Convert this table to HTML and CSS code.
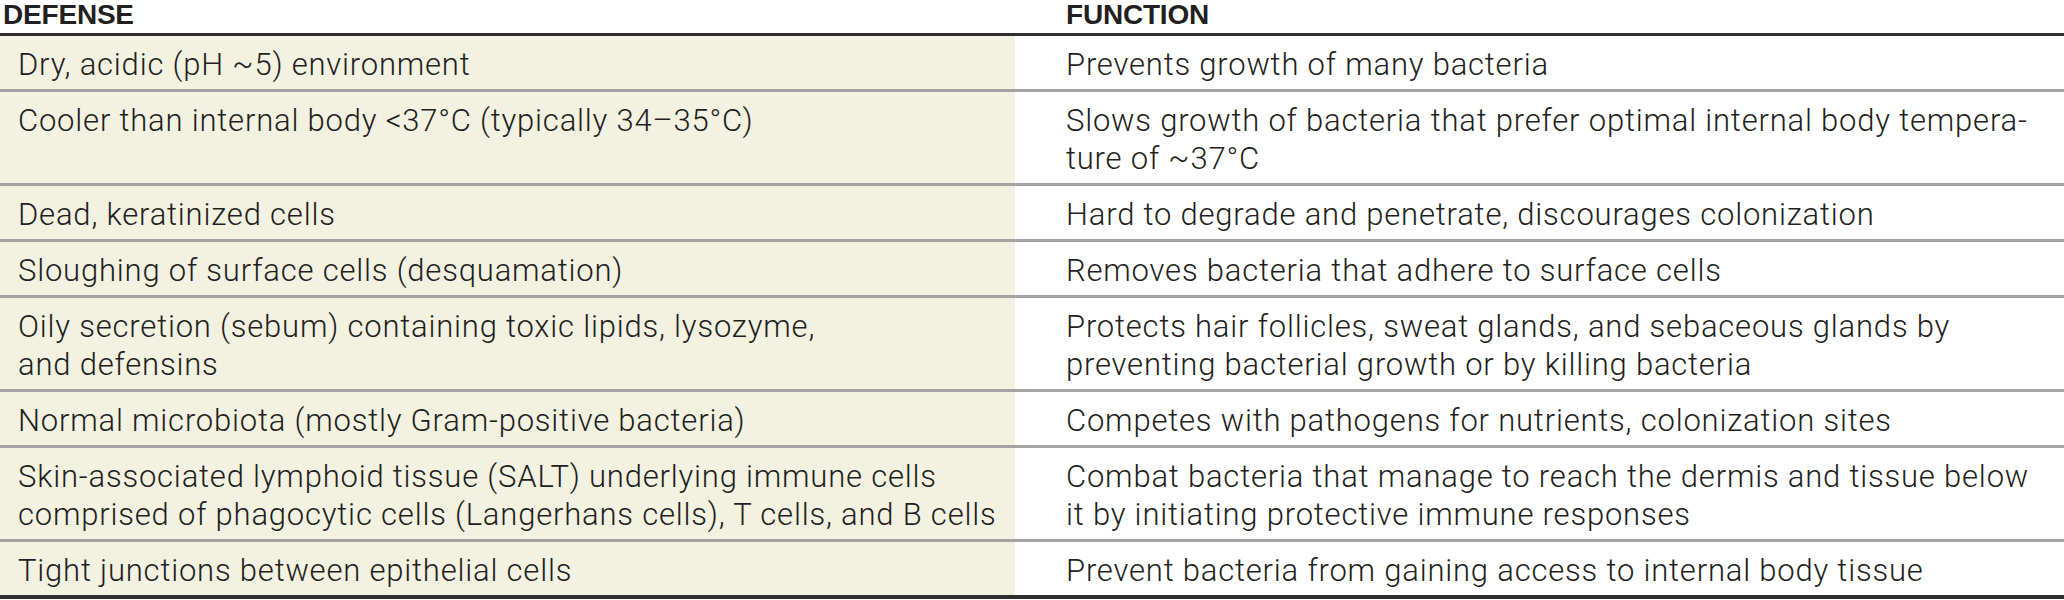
FILE: index.html
```html
<!DOCTYPE html>
<html>
<head>
<meta charset="utf-8">
<link rel="stylesheet" href="styles.css">
</head>
<body>
<div class="table">
  <div class="row head">
    <div class="cell left">DEFENSE</div>
    <div class="cell right">FUNCTION</div>
  </div>
  <div class="row">
    <div class="cell left">Dry, acidic (pH ~5) environment</div>
    <div class="cell right">Prevents growth of many bacteria</div>
  </div>
  <div class="row">
    <div class="cell left">Cooler than internal body &lt;37°C (typically 34–35°C)</div>
    <div class="cell right">Slows growth of bacteria that prefer optimal internal body tempera-<br>ture of ~37°C</div>
  </div>
  <div class="row">
    <div class="cell left">Dead, keratinized cells</div>
    <div class="cell right">Hard to degrade and penetrate, discourages colonization</div>
  </div>
  <div class="row">
    <div class="cell left">Sloughing of surface cells (desquamation)</div>
    <div class="cell right">Removes bacteria that adhere to surface cells</div>
  </div>
  <div class="row">
    <div class="cell left">Oily secretion (sebum) containing toxic lipids, lysozyme,<br>and defensins</div>
    <div class="cell right">Protects hair follicles, sweat glands, and sebaceous glands by<br>preventing bacterial growth or by killing bacteria</div>
  </div>
  <div class="row">
    <div class="cell left">Normal microbiota (mostly Gram-positive bacteria)</div>
    <div class="cell right">Competes with pathogens for nutrients, colonization sites</div>
  </div>
  <div class="row">
    <div class="cell left">Skin-associated lymphoid tissue (SALT) underlying immune cells<br>comprised of phagocytic cells (Langerhans cells), T cells, and B cells</div>
    <div class="cell right">Combat bacteria that manage to reach the dermis and tissue below<br>it by initiating protective immune responses</div>
  </div>
  <div class="row last">
    <div class="cell left">Tight junctions between epithelial cells</div>
    <div class="cell right">Prevent bacteria from gaining access to internal body tissue</div>
  </div>
</div>
</body>
</html>
```
FILE: styles.css
```css
html, body {
  margin: 0;
  padding: 0;
  background: #ffffff;
}
.table {
  width: 2064px;
  font-family: Roboto, "Liberation Sans", sans-serif;
  font-weight: 300;
  font-size: 31px;
  line-height: 38px;
  letter-spacing: 0.8px;
  color: #231f20;
}
.row {
  display: grid;
  grid-template-columns: 1015px 1fr;
  border-bottom: 3px solid #a3a3a3;
}
.row.head {
  border-bottom: 3px solid #2e2e2e;
}
.row.last {
  border-bottom: 4px solid #2e2e2e;
}
.cell {
  white-space: nowrap;
  padding: 10px 0 5px 0;
}
.cell.left {
  background: #f3f1e0;
  padding-left: 18px;
}
.cell.right {
  padding-left: 51px;
}
.head .cell {
  background: #ffffff;
  font-family: "Liberation Sans", Arial, sans-serif;
  font-weight: 700;
  font-size: 28px;
  line-height: 30px;
  letter-spacing: -0.2px;
  padding: 0 0 3px 0;
}
.head .cell.left {
  padding-left: 3px;
}
.head .cell.right {
  padding-left: 51px;
}
```
